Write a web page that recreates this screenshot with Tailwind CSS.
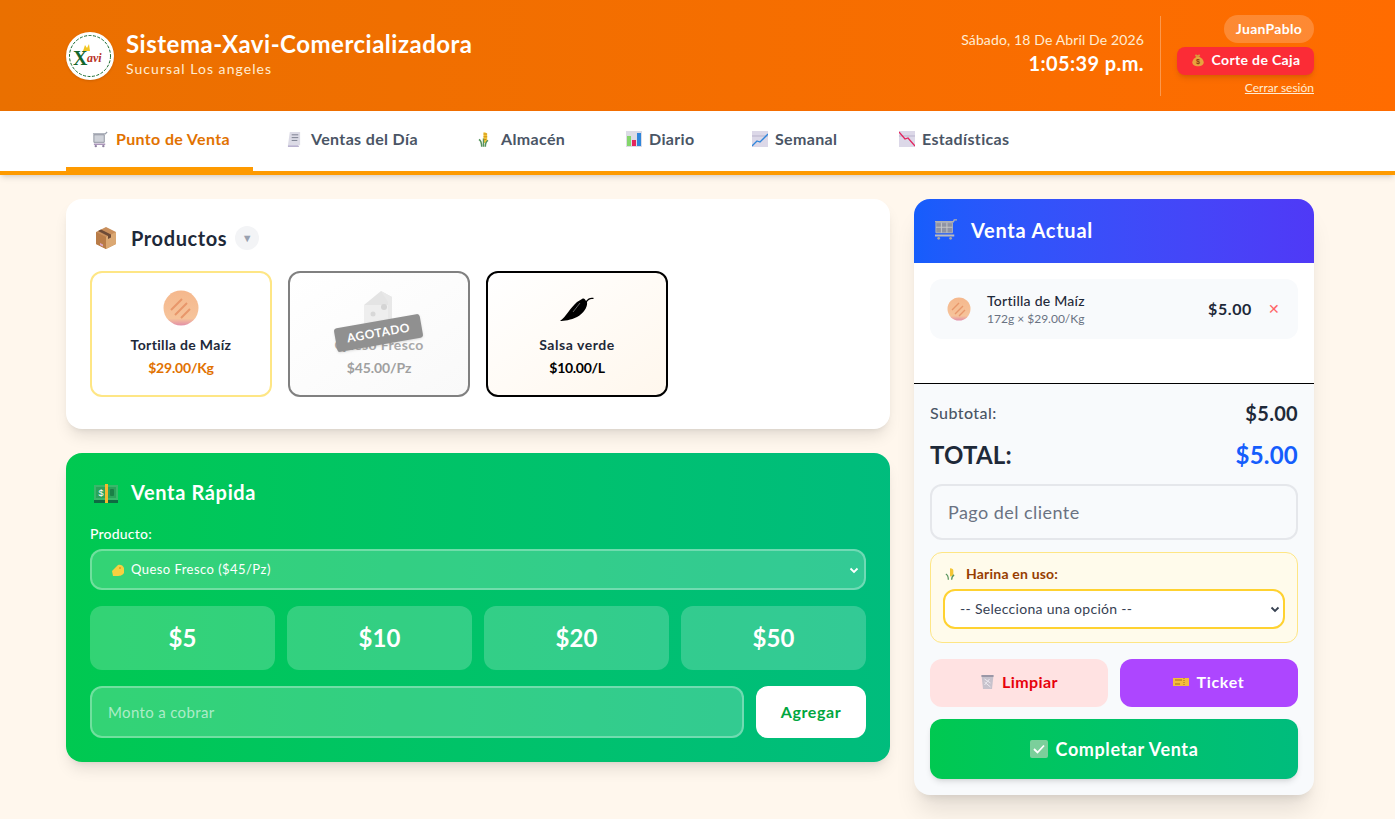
<!DOCTYPE html>
<html lang="es">
<head>
<meta charset="UTF-8" />
<title>Sistema-Xavi-Comercializadora</title>
<script src="https://cdn.jsdelivr.net/npm/@tailwindcss/browser@4"></script>
</head>
<body class="m-0 min-h-screen bg-orange-50 font-['Lato','Noto_Sans',sans-serif] text-gray-800 overflow-hidden">

  <!-- Header -->
  <header class="h-[111px] bg-gradient-to-r from-[#ea7000] to-[#ff6c00] text-white pl-[66px] pr-[81px] flex items-center justify-between">
    <div class="flex items-center gap-3">
      <div class="w-12 h-12 rounded-full bg-white shadow flex items-center justify-center overflow-hidden">
        <svg viewBox="0 0 48 48" class="w-12 h-12">
          <circle cx="24" cy="24" r="20.500" fill="none" stroke="#1a6b2f" stroke-width="1" stroke-dasharray="3 1.500"/>
          <path d="M17 19l2-6 2 3 2-4 1 7z" fill="#f2c522"/>
          <text x="7" y="33" font-size="20" font-weight="700" fill="#14662c" font-family="Liberation Serif">X</text>
          <text x="21" y="30" font-size="12" font-style="italic" font-weight="700" fill="#b8321f" font-family="Liberation Serif">avi</text>
        </svg>
      </div>
      <div class="mt-[-5px]">
        <h1 class="text-2xl font-bold leading-8 tracking-[0.5px]">Sistema-Xavi-Comercializadora</h1>
        <p class="text-sm leading-5 text-orange-100 tracking-[1.050px] mt-[-1px]">Sucursal Los angeles</p>
      </div>
    </div>
    <div class="flex items-center">
      <div class="text-right pr-4 mt-[-4px]">
        <p class="text-sm leading-5 text-orange-100 tracking-[0.130px]">Sábado, 18 De Abril De 2026</p>
        <p class="text-xl leading-7 font-bold tracking-[0.4px] mt-[-1px]">1:05:39 p.m.</p>
      </div>
      <div class="w-px h-20 bg-white/30 mr-4"></div>
      <div class="flex flex-col items-end">
        <span class="h-7 w-[90px] rounded-full bg-white/20 text-sm font-bold tracking-[0.3px] flex items-center justify-center">JuanPablo</span>
        <button class="mt-1 h-7 w-[137px] rounded-lg bg-red-500 shadow-md text-sm font-bold tracking-[0.35px] flex items-center justify-center gap-[7px] pb-[2px]">
          <svg viewBox="0 0 16 16" class="w-[14px] h-[14px]"><path d="M5.500 1.500l2 1 2-1 1 1.500-1.500 1.500h-3L4.500 3z" fill="#d79a3c"/><path d="M6 4.500h4c3 1.500 4.500 4 4.500 6 0 3-3 4.500-6.500 4.500s-6.500-1.500-6.500-4.500c0-2 1.500-4.500 4.500-6z" fill="#e8a33d"/><text x="8" y="13" font-size="8" text-anchor="middle" fill="#8a3b12" font-family="Liberation Sans">$</text></svg>
          Corte de Caja
        </button>
        <a href="#" class="mt-[5px] text-xs leading-4 underline text-orange-100">Cerrar sesión</a>
      </div>
    </div>
  </header>

  <!-- Nav -->
  <nav class="h-16 bg-white border-b-4 border-amber-500 shadow-md pl-[66px]">
    <ul class="flex h-[60px] text-base font-bold text-gray-600 tracking-[0.35px]">
      <li class="w-[187px] pl-[26px] flex items-center gap-[7px] border-b-4 border-amber-500 text-amber-600">
        <svg viewBox="0 0 18 18" class="w-[17px] h-[17px]"><path d="M1 3h13l2-2" stroke="#9aa0ac" stroke-width="1.300" fill="none"/><path d="M2 4h11v8H2z" fill="#cfd2d9" stroke="#8e939f"/><path d="M2 14h12" stroke="#a58fb5" stroke-width="1.500"/><circle cx="4" cy="16" r="1.300" fill="#8e80a0"/><circle cx="12" cy="16" r="1.300" fill="#8e80a0"/></svg>
        Punto de Venta
      </li>
      <li class="w-[192px] ml-2 pl-[26px] flex items-center gap-[9px] pb-1">
        <svg viewBox="0 0 16 18" class="w-[15px] h-[17px]"><path d="M3 1h11v14H1z" fill="#dcdbe6"/><path d="M1 15h11l1 2H1z" fill="#b9b2cf"/><path d="M5 4h7M5 7h7M5 10h6" stroke="#767c8c"/></svg>
        Ventas del Día
      </li>
      <li class="w-[146px] ml-[6px] pl-[19px] flex items-center gap-[12px] pb-1">
        <svg viewBox="0 0 12 18" class="w-[11px] h-[17px]"><path d="M6 1c3 0 4 1 4 3v6c0 2-2 3-4 3z" fill="#f4c636"/><path d="M1 9c2 1 3 4 3 8M11 10c-2 1-3 3-3 7M6 8v9" stroke="#55935c" stroke-width="1.600" fill="none"/><path d="M6 3h4M6 6h4M6 9h3" stroke="#c88a12"/></svg>
        Almacén
      </li>
      <li class="w-[126px] ml-[2px] pl-[19px] flex items-center gap-[7px] pb-1">
        <svg viewBox="0 0 16 16" class="w-[16px] h-[16px]"><rect width="16" height="16" fill="#dcdce6"/><rect x="1" y="5" width="4" height="10" fill="#84d66b"/><rect x="6" y="9" width="4" height="6" fill="#e3255d"/><rect x="11" y="2" width="4" height="13" fill="#2f86db"/></svg>
        Diario
      </li>
      <li class="w-[148px] pl-[19px] flex items-center gap-[7px] pb-1">
        <svg viewBox="0 0 16 16" class="w-[16px] h-[16px]"><rect width="16" height="16" fill="#dcd8e8"/><path d="M0 5h16" stroke="#b9b3cc"/><path d="M0 15l5-5 3 1 8-8" stroke="#2f86db" stroke-width="1.300" fill="none"/></svg>
        Semanal
      </li>
      <li class="pl-[18px] flex items-center gap-[7px] pb-1">
        <svg viewBox="0 0 16 16" class="w-[16px] h-[16px]"><rect width="16" height="16" fill="#dcd8e8"/><path d="M0 5h16" stroke="#b9b3cc"/><path d="M0 1l6 7 3-1 7 8" stroke="#e3255d" stroke-width="1.300" fill="none"/></svg>
        Estadísticas
      </li>
    </ul>
  </nav>

  <!-- Main -->
  <main class="pl-[66px] pr-[81px] pt-6 grid grid-cols-3 gap-6 items-start">
    <div class="col-span-2 flex flex-col gap-6">

      <!-- Productos -->
      <section class="h-[230px] bg-white rounded-2xl shadow-lg p-6">
        <div class="flex items-center h-8 mt-[-1px] pl-[4px]">
          <svg viewBox="0 0 24 24" class="w-6 h-6"><path d="M12 1l10 5v12l-10 5-10-5V6z" fill="#c98f5c"/><path d="M12 11l10-5v12l-10 5z" fill="#dba873"/><path d="M2 6l10 5v12L2 18z" fill="#b97c48"/><path d="M7 3.500l10 5v3l-3 1.500v-3l-10-5z" fill="#6d4a36"/><path d="M6 17l3 1.500v2L6 19z" fill="#d9a6c4"/></svg>
          <h2 class="ml-[13px] text-xl font-bold text-gray-800 tracking-[0.6px]">Productos</h2>
          <span class="ml-[8px] w-6 h-6 rounded-full bg-gray-100 text-gray-400 text-[11px] flex items-center justify-center">▼</span>
        </div>
        <div class="mt-[17px] flex gap-4">
          <div class="w-[182px] h-[126px] rounded-xl border-2 border-amber-200 bg-white flex flex-col items-center pt-[17px]">
            <svg viewBox="0 0 36 36" class="w-9 h-9"><defs><linearGradient id="tort1" x1="0" y1="0" x2="0" y2="1"><stop offset="0" stop-color="#f5b88d"/><stop offset=".8" stop-color="#f6c39a"/><stop offset="1" stop-color="#e28fa8"/></linearGradient></defs><circle cx="18" cy="18" r="17.500" fill="url(#tort1)"/><path d="M8 20l11-11M12 25l12-12M18 28l9-9" stroke="#e8976b" stroke-width="2"/></svg>
            <p class="mt-[9px] text-sm leading-5 font-bold text-gray-800 tracking-[0.35px]">Tortilla de Maíz</p>
            <p class="mt-[3px] text-sm leading-5 font-bold text-amber-600 tracking-[-0.2px]">$29.00/Kg</p>
          </div>
          <div class="relative w-[182px] h-[126px] rounded-xl border-2 border-[#808080] bg-gradient-to-br from-white to-[#f9f9f9] flex flex-col items-center pt-[17px]">
            <svg viewBox="0 0 36 36" class="w-9 h-9"><path d="M3 15L20 1l11 6v8z" fill="#e4e4e4"/><path d="M3 15h28v20H3z" fill="#eeeeee"/><path d="M20 1l11 6v28h-4V12z" fill="#e8e8e8"/><circle cx="12" cy="24" r="2.500" fill="#d8d8d8"/><circle cx="23" cy="17" r="3" fill="#d4d4d4"/></svg>
            <p class="mt-[9px] text-sm leading-5 font-bold text-[#a8a8a8] tracking-[0.35px]">Queso Fresco</p>
            <p class="mt-[3px] text-sm leading-5 font-bold text-[#a0a0a0] tracking-[-0.1px]">$45.00/Pz</p>
            <span class="absolute left-[45px] top-[48px] w-[87px] h-[24px] rounded-[3px] bg-[#909090] text-white text-xs font-bold tracking-[0.6px] flex items-center justify-center -rotate-[10deg] shadow">AGOTADO</span>
          </div>
          <div class="w-[182px] h-[126px] rounded-xl border-2 border-black bg-gradient-to-br from-white to-orange-50 flex flex-col items-center pt-[17px]">
            <svg viewBox="0 0 36 36" class="w-9 h-9"><path d="M1 31c6-4 10-13 17-19l5-3c2-1 3 0 4 2 2-3 5-4 8-3l-1 1c-3-.5-5 1-6 3 1 5-4 12-10 15-6 3-13 4-17 4z" fill="#000"/><path d="M14 22l7-9" stroke="#666" stroke-width="1"/></svg>
            <p class="mt-[9px] text-sm leading-5 font-bold text-gray-800 tracking-[0.55px]">Salsa verde</p>
            <p class="mt-[3px] text-sm leading-5 font-bold text-black tracking-[-0.3px]">$10.00/L</p>
          </div>
        </div>
      </section>

      <!-- Venta rapida -->
      <section class="h-[309px] rounded-2xl shadow-lg bg-gradient-to-r from-green-500 to-emerald-500 text-white p-6">
        <div class="flex items-center h-7 mt-[1px] pl-[4px]">
          <svg viewBox="0 0 24 20" class="w-6 h-5 mt-[3px]"><rect y="1" width="24" height="15" fill="#39b86a"/><rect x="2" y="3" width="20" height="11" fill="#2aa35a"/><rect y="16" width="24" height="3" fill="#0e6b42"/><rect x="11" y="0" width="3" height="19" fill="#f5b92e"/><text x="7" y="12" font-size="9" text-anchor="middle" fill="#fff" font-family="Liberation Sans">$</text><rect x="16" y="5" width="4" height="7" rx="1" fill="#1a7f46"/></svg>
          <h2 class="ml-[13px] text-xl font-bold tracking-[0.65px]">Venta Rápida</h2>
        </div>
        <label class="block mt-[18px] text-sm leading-5 font-medium tracking-[0.2px]">Producto:</label>
        <div class="mt-[5px] h-[41px] rounded-xl border-2 border-white/30 bg-white/20 flex items-center pl-[19px] pr-[5px] text-[13px]">
          <svg viewBox="0 0 14 14" class="w-[14px] h-[14px]"><path d="M1 8l6-6c2-1 5 0 6 3v5c-2 3-5 3-8 3H2z" fill="#f7d040"/><circle cx="9" cy="5" r="1" fill="#d8a51e"/></svg>
          <span class="ml-[6px] tracking-[0.45px]">Queso Fresco ($45/Pz)</span>
          <svg viewBox="0 0 10 10" class="ml-auto w-[10px] h-[10px]"><path d="M1.500 3.500L5 7l3.500-3.500" stroke="#fff" stroke-width="1.800" fill="none"/></svg>
        </div>
        <div class="mt-4 grid grid-cols-4 gap-3">
          <button class="h-16 rounded-xl bg-white/20 text-2xl font-bold">$5</button>
          <button class="h-16 rounded-xl bg-white/20 text-2xl font-bold">$10</button>
          <button class="h-16 rounded-xl bg-white/20 text-2xl font-bold">$20</button>
          <button class="h-16 rounded-xl bg-white/20 text-2xl font-bold">$50</button>
        </div>
        <div class="mt-4 flex gap-3">
          <input placeholder="Monto a cobrar" class="flex-1 h-[52px] rounded-xl border-2 border-white/30 bg-white/20 px-4 text-[15px] tracking-[0.35px] placeholder:text-white/60 outline-none" />
          <button class="w-[110px] h-[52px] rounded-xl bg-white text-green-600 text-base font-bold tracking-[0.6px]">Agregar</button>
        </div>
      </section>
    </div>

    <!-- Venta actual -->
    <aside class="h-[596px] rounded-2xl shadow-xl bg-slate-50 overflow-hidden flex flex-col">
      <div class="h-16 bg-gradient-to-r from-blue-600 to-indigo-600 text-white flex items-center pl-5 pb-[2px]">
        <svg viewBox="0 0 26 24" class="w-6 h-[22px]"><path d="M1 3h20l1-2h3" stroke="#b0b0b0" stroke-width="1.500" fill="none"/><path d="M2 4h18v11H2z" fill="#8f93a3" stroke="#b5b5b5"/><path d="M8 4v11M14 4v11M2 9h18" stroke="#c9c9c9"/><path d="M1 18h21" stroke="#bcbcbc" stroke-width="2"/><circle cx="5" cy="21" r="1.500" fill="#a5a5a5"/><circle cx="18" cy="21" r="1.500" fill="#a5a5a5"/></svg>
        <h2 class="ml-[13px] text-xl font-bold tracking-[0.75px]">Venta Actual</h2>
      </div>
      <div class="h-[121px] bg-white border-b border-black p-4">
        <div class="h-[60px] rounded-xl bg-slate-50 flex items-center pl-[17px] pr-[18px]">
          <svg viewBox="0 0 24 24" class="w-6 h-6"><defs><linearGradient id="tort2" x1="0" y1="0" x2="0" y2="1"><stop offset="0" stop-color="#f5b88d"/><stop offset=".8" stop-color="#f6c39a"/><stop offset="1" stop-color="#e28fa8"/></linearGradient></defs><circle cx="12" cy="12" r="11.500" fill="url(#tort2)"/><path d="M5 13l7-7M8 17l8-8M12 19l6-6" stroke="#e8976b" stroke-width="1.400"/></svg>
          <div class="ml-4 mt-[-1px]">
            <p class="text-sm leading-5 font-medium text-gray-800 tracking-[0.25px]">Tortilla de Maíz</p>
            <p class="text-xs leading-4 text-gray-500">172g × $29.00/Kg</p>
          </div>
          <span class="ml-auto text-base font-bold text-gray-800 tracking-[0.6px]">$5.00</span>
          <span class="ml-4 text-red-400 text-sm leading-none">✕</span>
        </div>
      </div>
      <div class="px-4 pt-[15px]">
        <div class="flex items-center justify-between h-7">
          <span class="text-base font-medium text-gray-600 tracking-[0.45px]">Subtotal:</span>
          <span class="text-xl font-bold text-gray-800 tracking-[0.3px]">$5.00</span>
        </div>
        <div class="mt-[12px] flex items-center justify-between h-8">
          <span class="text-2xl font-bold text-gray-800 tracking-[0.2px]">TOTAL:</span>
          <span class="text-2xl font-bold text-blue-600 tracking-[0.2px]">$5.00</span>
        </div>
        <input placeholder="Pago del cliente" class="mt-[13px] w-full h-14 rounded-xl border-2 border-gray-200 bg-slate-50 px-4 pb-[1px] text-lg tracking-[0.45px] placeholder:text-gray-500 outline-none" />
        <div class="mt-3 h-[91px] rounded-xl border border-amber-200 bg-amber-50 px-3 pt-[11px]">
          <div class="flex items-center pl-[2px] text-sm leading-5 font-bold text-amber-800">
            <svg viewBox="0 0 12 16" class="w-[10px] h-[14px]"><path d="M6 1c3 0 4 1 4 3v5c0 1-2 2-4 2z" fill="#f4c636"/><path d="M1 8c2 1 3 3 3 7M11 9c-2 1-3 3-3 6" stroke="#55935c" stroke-width="1.500" fill="none"/></svg>
            <span class="ml-[11px] tracking-[0.2px]">Harina en uso:</span>
          </div>
          <div class="mt-[5px] h-10 rounded-xl border-2 border-amber-300 bg-white flex items-center pl-[15px] pr-[3px] text-sm text-gray-700 tracking-[0.3px]">
            -- Selecciona una opción --
            <svg viewBox="0 0 10 10" class="ml-auto w-[10px] h-[10px]"><path d="M1.500 3.500L5 7l3.500-3.500" stroke="#374151" stroke-width="1.800" fill="none"/></svg>
          </div>
        </div>
        <div class="mt-4 grid grid-cols-2 gap-3">
          <button class="h-12 rounded-xl bg-red-100 text-red-600 text-base font-bold tracking-[0.4px] flex items-center justify-center gap-[7px] pb-[2px]">
            <svg viewBox="0 0 14 16" class="w-[15px] h-4"><path d="M1 1h12l-1.500 14h-9z" fill="#c7c2cc"/><path d="M1 1h12v2H1z" fill="#9b97a6"/><path d="M4 5l6 4M9 5l-5 6M4 8l6 5" stroke="#ece9ef"/></svg>
            Limpiar
          </button>
          <button class="h-12 rounded-xl bg-purple-500 text-white text-base font-bold tracking-[0.7px] flex items-center justify-center gap-[7px] pb-[2px]">
            <svg viewBox="0 0 16 10" class="w-4 h-[10px]"><path d="M0 1h16v8H0z" fill="#f4bd3c"/><path d="M2 3h7M2 7h5" stroke="#a5701a"/><path d="M11 1v8" stroke="#a5701a" stroke-dasharray="1 1"/></svg>
            Ticket
          </button>
        </div>
        <button class="mt-3 w-full h-[60px] rounded-xl bg-gradient-to-r from-green-500 to-emerald-500 text-white text-lg font-bold tracking-[0.6px] shadow-md flex items-center justify-center gap-[8px]">
          <svg viewBox="0 0 18 18" class="w-[18px] h-[18px]"><rect width="18" height="18" rx="2" fill="#7bcf9b"/><path d="M4 9l3.500 3.500L14 5.500" stroke="#fff" stroke-width="1.800" fill="none"/></svg>
          Completar Venta
        </button>
      </div>
    </aside>
  </main>
</body>
</html>
